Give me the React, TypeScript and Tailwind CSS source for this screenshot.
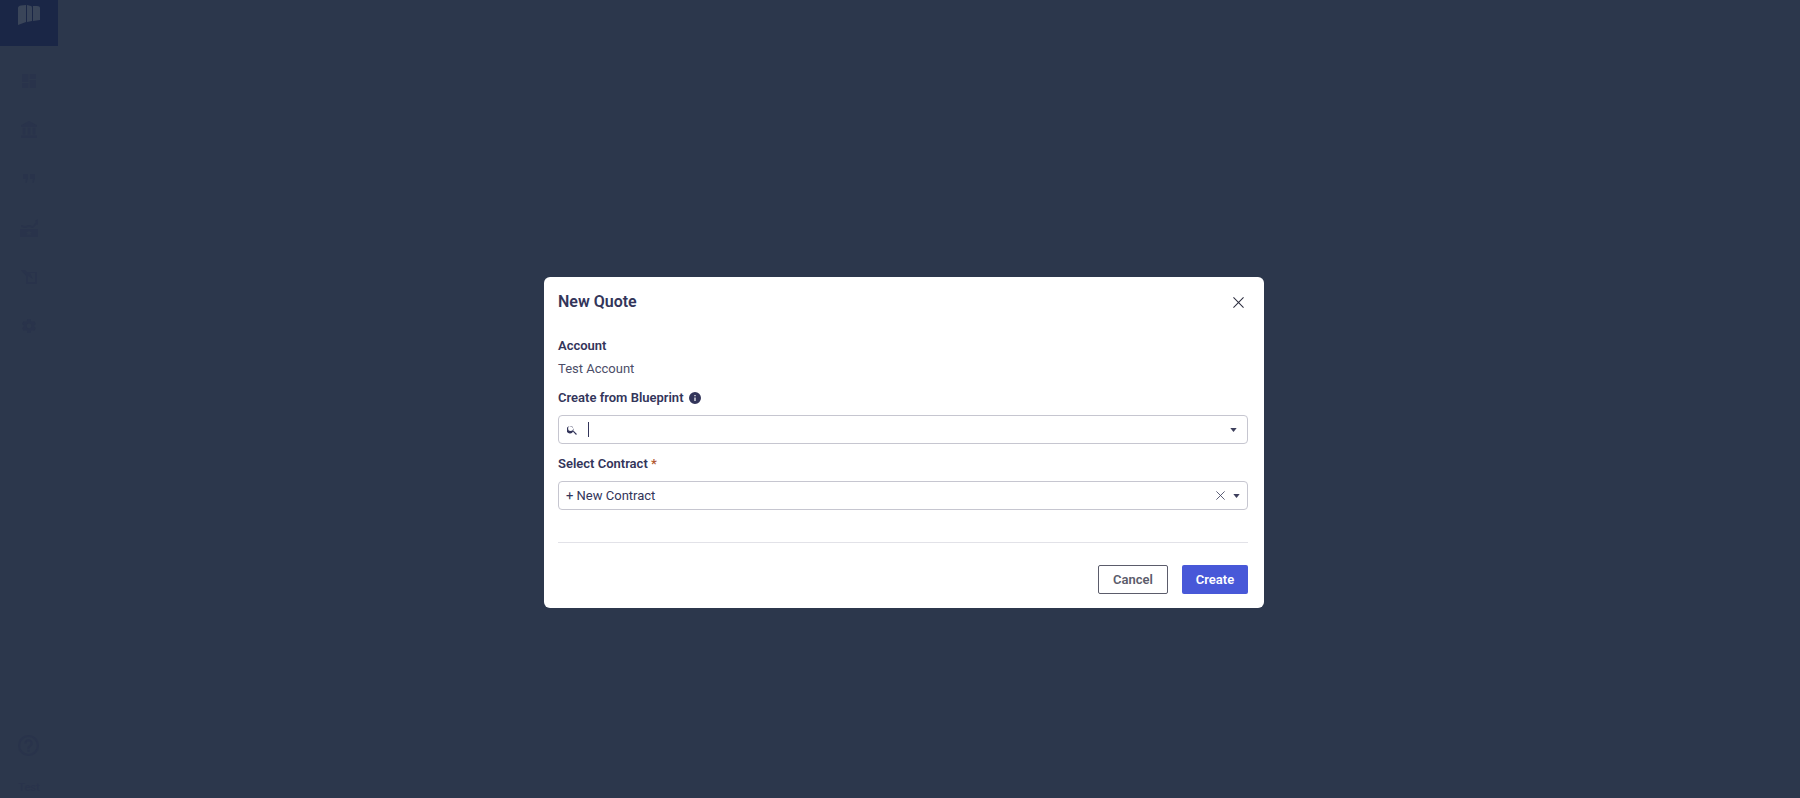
const iconColor = 'fill-[#29334b]';

const CaretDown = () => (
  <svg viewBox="0 0 8 5" className="w-[7px] h-[4px] fill-[#3d3f5c]">
    <path d="M0 0h8L4 5z" />
  </svg>
);

const CloseIcon = ({ className }: { className: string }) => (
  <svg viewBox="0 0 12 12" className={className} fill="none" stroke="currentColor" strokeWidth="1.1">
    <path d="M0.500 0.500l11 11M11.500 0.500l-11 11" />
  </svg>
);

const NavItem = ({ children }: { children: React.ReactNode }) => (
  <div className="h-[49px] flex items-center justify-center">{children}</div>
);

const Sidebar = () => (
  <aside className="w-[58px] h-[798px] flex flex-col items-center bg-[#2c374c]">
    <div className="w-[58px] h-[46px] flex justify-center pt-[5px] bg-[#1a2646] shrink-0">
      <svg viewBox="0 0 22 21" className="w-[22px] h-[21px] fill-[#3a4559]">
        <path d="M0 3 Q0 1 3 0.500 L8 0 V17 L0 20z" />
        <path d="M9 0 L13 1 Q14 1 14 3 V16 L9 17z" />
        <path d="M15 1 L19 1 Q22 1 22 3 V15 L15 16z" />
      </svg>
    </div>
    <div className="flex flex-col mt-[10px]">
      <NavItem>
        <svg viewBox="0 0 18 18" className={`w-[14px] h-[14px] ${iconColor}`}>
          <path d="M0 0h8v10H0zM10 0h8v6h-8zM10 8h8v10h-8zM0 12h8v6H0z" />
        </svg>
      </NavItem>
      <NavItem>
        <svg viewBox="0 0 19 20" className={`w-[16px] h-[17px] ${iconColor}`}>
          <path d="M2 8v8h3V8H2zm6 0v8h3V8H8zM0 20h19v-3H0v3zM14 8v8h3V8h-3zM9.500 0 0 5v2h19V5L9.500 0z" />
        </svg>
      </NavItem>
      <NavItem>
        <svg viewBox="0 0 12 9" className={`w-[12px] h-[9px] ${iconColor}`}>
          <path d="M0 0h5v4L3.500 9h-1L3 5H0zM7 0h5v4l-1.500 5h-1l.5-4H7z" />
        </svg>
      </NavItem>
      <NavItem>
        <svg viewBox="0 0 18 18" className={`w-[18px] h-[18px] ${iconColor}`}>
          <path d="M1 6l4 1 4-1 4 1 3-4-1-1 3-2v6l-1-1-4 4-4-1-4 1-4-1zM0 10h18v8H0zM9 11l-1 2H6l1.500 1.500L7 16.500 9 15.500l2 1-.5-2L12 13h-2z" fillRule="evenodd" />
        </svg>
      </NavItem>
      <NavItem>
        <svg viewBox="0 0 16 14" className={`w-[16px] h-[14px] ${iconColor}`}>
          <path d="M0 0h4l2 2h10v12H5V6zM7 6v6h7V3H9l3 6-3-2z" fillRule="evenodd" />
        </svg>
      </NavItem>
      <NavItem>
        <svg viewBox="2 2 20 20" className={`w-[14px] h-[14px] ${iconColor}`}>
          <path d="M19.400 13c0-.3.100-.6.100-1s0-.7-.1-1l2.100-1.600c.2-.2.200-.4.100-.6l-2-3.500c-.1-.2-.4-.3-.6-.2l-2.500 1c-.5-.4-1.100-.7-1.700-1l-.4-2.600c0-.3-.2-.4-.5-.4h-4c-.3 0-.5.100-.5.400l-.4 2.600c-.6.300-1.200.6-1.700 1l-2.500-1c-.2-.1-.5 0-.6.200l-2 3.500c-.1.200-.1.400.1.600L4.500 11c0 .3-.1.600-.1 1s0 .7.1 1l-2.100 1.600c-.2.200-.2.400-.1.600l2 3.500c.1.200.4.300.6.200l2.500-1c.5.400 1.100.7 1.700 1l.4 2.600c0 .3.200.4.500.4h4c.3 0 .5-.1.500-.4l.4-2.600c.6-.3 1.200-.6 1.700-1l2.500 1c.2.100.5 0 .6-.2l2-3.500c.1-.2.100-.4-.1-.6L19.400 13zM12 15.500a3.500 3.500 0 1 1 0-7 3.500 3.500 0 0 1 0 7z" />
        </svg>
      </NavItem>
    </div>
    <div className="mt-auto flex flex-col items-center">
      <svg viewBox="2 2 20 20" className={`w-[21px] h-[21px] ${iconColor}`}>
        <path d="M11 18h2v-2h-2v2zm1-16a10 10 0 1 0 0 20 10 10 0 0 0 0-20zm0 18a8 8 0 1 1 0-16 8 8 0 0 1 0 16zm0-14a4 4 0 0 0-4 4h2a2 2 0 1 1 4 0c0 2-3 1.750-3 5h2c0-2.250 3-2.500 3-5a4 4 0 0 0-4-4z" />
      </svg>
      <span className="mt-[25px] mb-[3px] text-[11px] leading-[14px] font-medium text-[#29334b]">Test</span>
    </div>
  </aside>
);

const Label = ({ children }: { children: React.ReactNode }) => (
  <div className="text-[13px] leading-[16px] font-semibold text-[#33355a]">{children}</div>
);

export default function App() {
  return (
    <div className="relative w-[1800px] h-[798px] overflow-hidden bg-[#2c374c] font-['Roboto',sans-serif]">
      <Sidebar />
      <div className="absolute inset-0 pl-[544px] pt-[277px]">
        <div className="w-[720px] h-[331px] bg-white rounded-[6px] pl-[14px] pr-[16px] pt-[14px] flex flex-col">
          <div className="flex items-center justify-between h-[22px]">
            <h2 className="text-[16px] leading-[22px] font-semibold text-[#33355a]">New Quote</h2>
            <CloseIcon className="mr-[4px] w-[11px] h-[11px] text-[#2a2b3d]" />
          </div>
          <div className="mt-[25px]">
            <Label>Account</Label>
          </div>
          <div className="mt-[7px] text-[13px] leading-[16px] text-[#4b4d68]">Test Account</div>
          <div className="mt-[13px] flex items-center gap-[5px]">
            <Label>Create from Blueprint</Label>
            <svg viewBox="2 2 20 20" className="w-[12px] h-[12px] fill-[#33355a]">
              <path d="M12 2a10 10 0 1 0 0 20 10 10 0 0 0 0-20zm1 15h-2v-6h2v6zm0-8h-2V7h2v2z" />
            </svg>
          </div>
          <div className="mt-[9px] h-[29px] flex items-center border border-[#c6c6d0] rounded-[4px] pl-[8px] pr-[10px]">
            <svg viewBox="3 3 18 18" className="w-[10px] h-[10px] fill-[#33355a]">
              <path d="M15.500 14h-.8l-.3-.3A6.500 6.500 0 1 0 14 14.700l.3.3v.8l5 5 1.500-1.500-5-5zm-6 0a4.500 4.500 0 1 1 0-9 4.500 4.500 0 0 1 0 9z" />
            </svg>
            <div className="ml-[11px] w-px h-[15px] bg-[#33355a]" />
            <div className="ml-auto">
              <CaretDown />
            </div>
          </div>
          <div className="mt-[12px]">
            <Label>
              Select Contract <span className="text-[#b0562f]">*</span>
            </Label>
          </div>
          <div className="mt-[9px] h-[29px] flex items-center border border-[#c6c6d0] rounded-[4px] pl-[7px] pr-[7px]">
            <span className="text-[13px] text-[#33355a]">+ New Contract</span>
            <CloseIcon className="ml-auto w-[9px] h-[9px] text-[#3d3f5c]" />
            <div className="ml-[8px] flex">
              <CaretDown />
            </div>
          </div>
          <div className="mt-[32px] border-t border-[#e2e2e8]" />
          <div className="mt-[22px] flex justify-end gap-[14px]">
            <button className="w-[70px] h-[29px] border border-[#5b5c6b] rounded-[2px] text-[13px] font-semibold text-[#5b5c6b]">
              Cancel
            </button>
            <button className="w-[66px] h-[29px] bg-[#4858d8] rounded-[2px] text-[13px] font-semibold text-white">
              Create
            </button>
          </div>
        </div>
      </div>
    </div>
  );
}
